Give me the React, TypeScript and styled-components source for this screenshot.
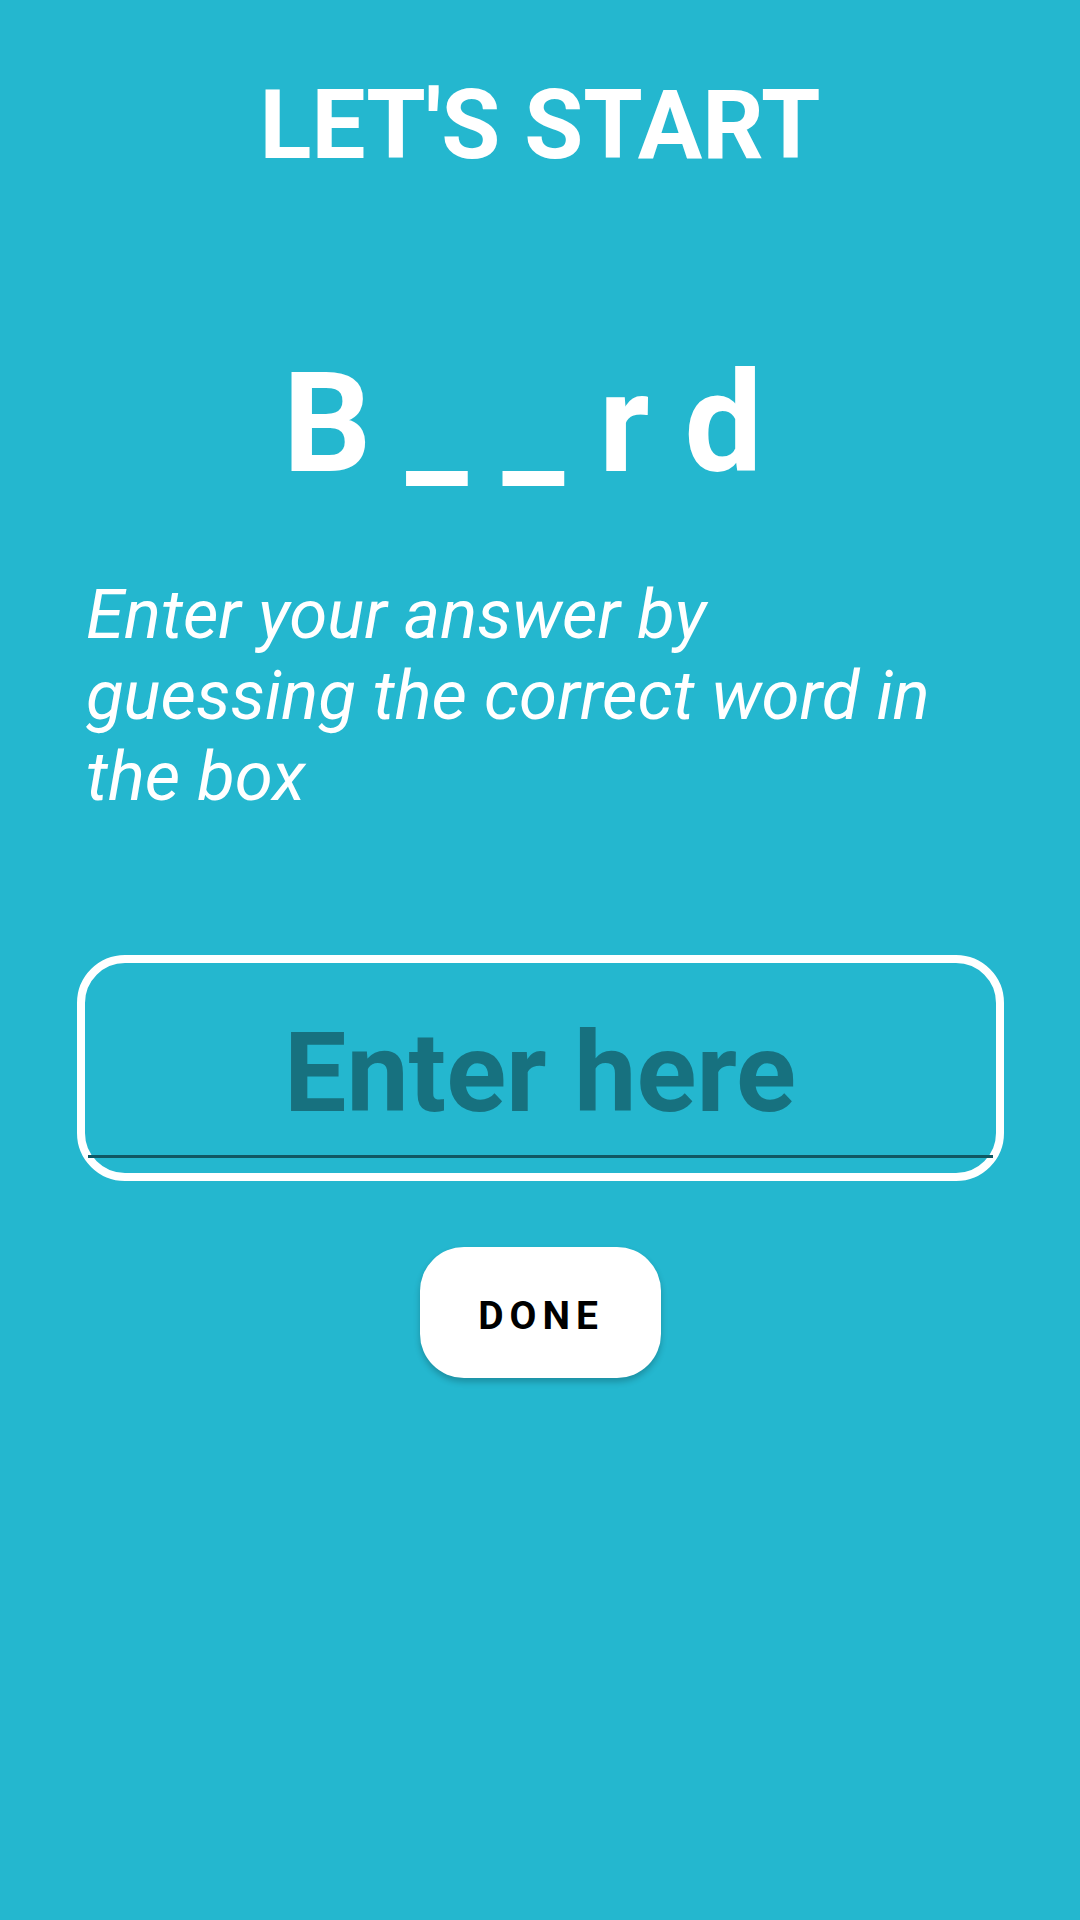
import React from "react";
import styled, { createGlobalStyle } from "styled-components";

const GlobalStyle = createGlobalStyle`
  html, body {
    margin: 0;
    padding: 0;
    background: #24b7cf;
  }
  body {
    font-family: Roboto, "Noto Sans", "Liberation Sans", sans-serif;
  }
  * { box-sizing: border-box; }
`;

const Screen = styled.main`
  width: 1080px;
  min-height: 1920px;
  background: #24b7cf;
  display: flex;
  flex-direction: column;
  align-items: center;
  padding-top: 69px;
`;

const Title = styled.h1`
  margin: 0;
  font-family: Roboto, sans-serif;
  font-weight: 700;
  font-size: 96px;
  line-height: 112px;
  color: #ffffff;
  text-align: center;
`;

const Puzzle = styled.div`
  margin-top: 161px;
  font-family: Roboto, sans-serif;
  font-weight: 700;
  font-size: 139px;
  line-height: 164px;
  color: #ffffff;
  white-space: pre;
  text-align: center;
`;

const Instruction = styled.p`
  align-self: stretch;
  margin: 68px 0 0;
  padding: 0 40px 0 86px;
  font-family: Roboto, sans-serif;
  font-style: italic;
  font-weight: 400;
  font-size: 69px;
  line-height: 81px;
  color: #ffffff;
`;

const AnswerBox = styled.div`
  margin-top: 138px;
  width: 927px;
  height: 226px;
  border: 8px solid #ffffff;
  border-radius: 48px;
  padding: 0 3px;
`;

const AnswerInput = styled.input`
  display: block;
  width: 100%;
  height: 195px;
  margin: 0;
  padding: 45px 0 17px;
  border: none;
  border-bottom: 3px solid #0f5864;
  background: transparent;
  outline: none;
  font-family: Roboto, sans-serif;
  font-weight: 700;
  font-size: 111px;
  line-height: 130px;
  color: #0e4f5a;
  text-align: center;

  &::placeholder {
    color: #17717f;
    opacity: 1;
  }
`;

const DoneButton = styled.button`
  margin-top: 66px;
  width: 241px;
  height: 131px;
  border: none;
  border-radius: 44px;
  background: #ffffff;
  box-shadow: 0 4px 6px rgba(0, 0, 0, 0.22);
  display: flex;
  align-items: center;
  justify-content: center;
  padding: 6px 0 0 2px;
  font-family: Roboto, sans-serif;
  font-weight: 700;
  font-size: 39px;
  letter-spacing: 6px;
  color: #000000;
  cursor: pointer;
`;

export default function App() {
  return (
    <>
      <GlobalStyle />
      <Screen>
        <Title>LET'S START</Title>
        <Puzzle>{"B _ _ r d "}</Puzzle>
        <Instruction>
          Enter your answer by
          <br />
          guessing the correct word in
          <br />
          the box
        </Instruction>
        <AnswerBox>
          <AnswerInput type="text" placeholder="Enter here" />
        </AnswerBox>
        <DoneButton type="button">DONE</DoneButton>
      </Screen>
    </>
  );
}
